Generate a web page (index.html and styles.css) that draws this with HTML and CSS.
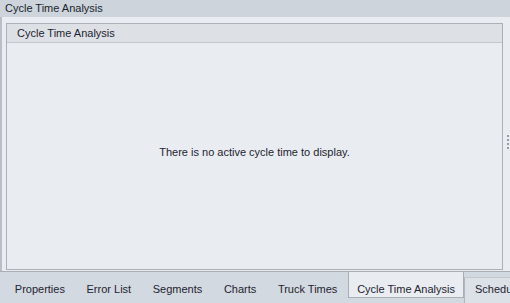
FILE: index.html
```html
<!DOCTYPE html>
<html lang="en">
<head>
  <meta charset="UTF-8">
  <title>Cycle Time Analysis</title>
  <link rel="stylesheet" href="styles.css">
</head>
<body>
  <div class="window">
    <div class="title-bar">Cycle Time Analysis</div>

    <div class="main">
      <div class="panel">
        <div class="panel-head">Cycle Time Analysis</div>
        <div class="panel-body">There is no active cycle time to display.</div>
      </div>
      <div class="splitter">
        <span></span>
        <span></span>
        <span></span>
        <span></span>
      </div>
    </div>

    <div class="tabs">
      <div class="tab">Properties</div>
      <div class="tab">Error List</div>
      <div class="tab">Segments</div>
      <div class="tab">Charts</div>
      <div class="tab">Truck Times</div>
      <div class="tab active">Cycle Time Analysis</div>
      <div class="tab raised">Schedule</div>
    </div>
  </div>
</body>
</html>
```

FILE: styles.css
```css
* {
  box-sizing: border-box;
  margin: 0;
  padding: 0;
}
body {
  font-family: "Liberation Sans", Arial, sans-serif;
  font-size: 11px;
  color: #1e2430;
  background: #e9ecf0;
  overflow: hidden;
}
.window {
  display: flex;
  flex-direction: column;
  width: 510px;
  height: 303px;
}
.title-bar {
  height: 17px;
  line-height: 16px;
  padding-left: 5px;
  background: #cdd4dc;
  color: #20242c;
  white-space: nowrap;
}
.main {
  flex: 1;
  display: flex;
  padding: 6px 0 1px 4px;
  border-left: 2px solid #b9bfc7;
}
.panel {
  flex: 1;
  display: flex;
  flex-direction: column;
  border: 1px solid #abb0b7;
  background: #e9ecf0;
}
.panel-head {
  height: 19px;
  line-height: 18px;
  padding-left: 10px;
  background: #dde1e6;
  border-bottom: 1px solid #c3c8ce;
  white-space: nowrap;
}
.panel-body {
  flex: 1;
  display: flex;
  align-items: center;
  justify-content: center;
  padding-bottom: 8px;
}
.splitter {
  width: 7px;
  display: flex;
  flex-direction: column;
  align-items: flex-end;
  justify-content: center;
  gap: 2px;
  padding-right: 1px;
  padding-bottom: 9px;
}
.splitter span {
  width: 2px;
  height: 2px;
  background: #969ba5;
}
.tabs {
  height: 32px;
  display: flex;
  align-items: flex-start;
  background: #d3d9e0;
  border-top: 1px solid #a9aeb5;
  padding-left: 4px;
  white-space: nowrap;
  overflow: hidden;
}
.tab {
  height: 26px;
  padding: 8px 10.8px 0;
  line-height: 18px;
  color: #1e2430;
}
.tab.active {
  margin-top: -1px;
  height: 27px;
  padding: 9px 8px 0;
  background: #e9ecf0;
  border: 1px solid #a9aeb5;
  border-top: none;
}
.tab.raised {
  margin-top: 5px;
  height: 26px;
  padding: 2px 10px 0;
  background: #dce1e7;
  border-left: 1px solid #b1b6bd;
  border-top: 1px solid #c4c9cf;
}
```
